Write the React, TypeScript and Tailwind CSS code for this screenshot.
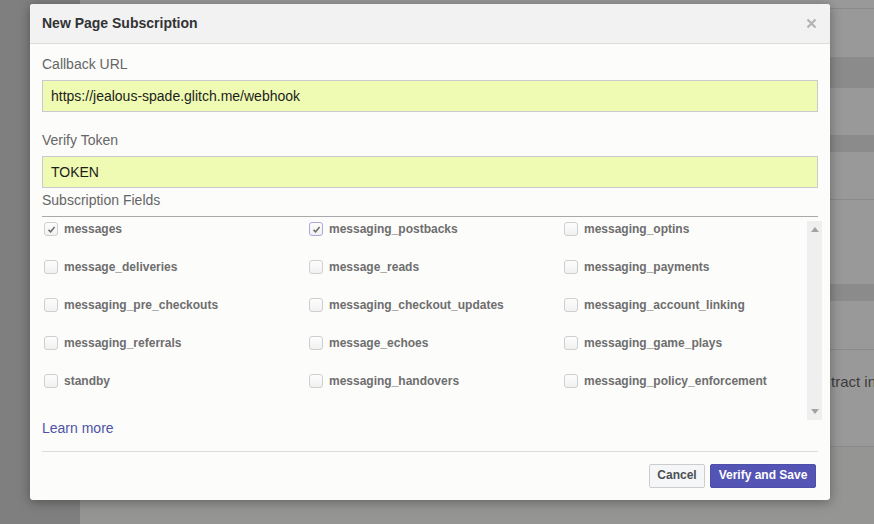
import React from "react";

const fields: { name: string; checked?: boolean; focus?: boolean }[][] = [
  [{ name: "messages", checked: true }, { name: "messaging_postbacks", checked: true, focus: true }, { name: "messaging_optins" }],
  [{ name: "message_deliveries" }, { name: "message_reads" }, { name: "messaging_payments" }],
  [{ name: "messaging_pre_checkouts" }, { name: "messaging_checkout_updates" }, { name: "messaging_account_linking" }],
  [{ name: "messaging_referrals" }, { name: "message_echoes" }, { name: "messaging_game_plays" }],
  [{ name: "standby" }, { name: "messaging_handovers" }, { name: "messaging_policy_enforcement" }],
];

const Checkbox = ({ checked, focus }: { checked?: boolean; focus?: boolean }) => (
  <span
    className={`flex h-[14px] w-[14px] shrink-0 items-center justify-center rounded-[3px] border bg-gradient-to-b from-[#fdfdfd] to-[#f1f1f1] ${
      focus ? "border-[#a9a9dc]" : "border-[#cfcfcf]"
    }`}
  >
    {checked && (
      <svg width="9" height="9" viewBox="0 0 9 9">
        <path d="M1.5 4.8 L3.6 6.8 L7.6 2" fill="none" stroke="#6f6f6f" strokeWidth="1.6" />
      </svg>
    )}
  </span>
);

const Background = () => (
  <div className="flex h-[524px] w-[874px]">
    <div className="w-[80px] shrink-0 bg-[#7f7f7f]" />
    <div className="flex min-w-0 flex-1 flex-col overflow-hidden bg-[#9a999a]">
      <div className="h-[9px] border-b border-[#8b8a8b]" />
      <div className="h-[48px]" />
      <div className="h-[31px] bg-[#8c8b8c]" />
      <div className="h-[47px]" />
      <div className="h-[17px] bg-[#8c8b8c]" />
      <div className="h-[48px] border-b border-[#8b8a8b]" />
      <div className="h-[84px]" />
      <div className="h-[17px] bg-[#8c8b8c]" />
      <div className="h-[49px] border-b border-[#8b8a8b]" />
      <div className="h-[97px] border-b border-[#8b8a8b] pl-[751px] pt-[21px] text-[15px] text-[#3c3c3c] whitespace-nowrap">
        tract info
      </div>
      <div className="flex-1 bg-[#959594]" />
    </div>
  </div>
);

export default function App() {
  return (
    <div className="relative h-[524px] w-[874px] overflow-hidden font-['Liberation_Sans',Arial,sans-serif]">
      <Background />
      <div className="absolute left-[30px] top-[4px] flex h-[496px] w-[800px] flex-col overflow-hidden rounded-[3px] bg-[#fcfcfb] shadow-[0_2px_12px_rgba(0,0,0,0.35)]">
        <div className="flex h-[40px] shrink-0 items-center justify-between border-b border-[#dddddd] bg-[#f2f2f3] pl-[12px] pr-[13px]">
          <span className="text-[14px] font-bold text-[#333333]">New Page Subscription</span>
          <svg width="11" height="11" viewBox="0 0 11 11">
            <path d="M1.5 1.5 L9.5 9.5 M9.5 1.5 L1.5 9.5" stroke="#b3b3b3" strokeWidth="2.2" />
          </svg>
        </div>
        <div className="flex flex-1 flex-col px-[12px]">
          <label className="mt-[11px] text-[14px] leading-[18px] text-[#666666]">Callback URL</label>
          <div className="mt-[7px] flex h-[32px] items-center border border-[#c9c9d0] bg-[#effbb2] px-[8px] text-[14px] text-[#1d1d1d]">
            https://jealous-spade.glitch.me/webhook
          </div>
          <label className="mt-[19px] text-[14px] leading-[18px] text-[#666666]">Verify Token</label>
          <div className="mt-[7px] flex h-[32px] items-center border border-[#c9c9d0] bg-[#effbb2] px-[8px] text-[14px] text-[#1d1d1d]">
            TOKEN
          </div>
          <label className="mt-[3px] text-[14px] leading-[18px] text-[#666666]">Subscription Fields</label>
          <div className="mt-[7px] h-px bg-[#a9a9a9]" />
          <div className="mr-[-4px] mt-[4px] flex h-[199px]">
            <div className="flex-1 pt-[1px]">
              {fields.map((row, i) => (
                <div key={i} className="grid h-[38px] grid-cols-[265px_255px_1fr] pl-[2px]">
                  {row.map((f) => (
                    <div key={f.name} className="flex h-[14px] items-center gap-[6px]">
                      <Checkbox checked={f.checked} focus={f.focus} />
                      <span className="text-[12px] font-bold text-[#6e6e6e] whitespace-nowrap">{f.name}</span>
                    </div>
                  ))}
                </div>
              ))}
            </div>
            <div className="flex w-[15px] flex-col items-center justify-between bg-[#efefef] py-[6px]">
              <svg width="8" height="5" viewBox="0 0 8 5">
                <path d="M0 5 L4 0 L8 5 Z" fill="#a3a3a3" />
              </svg>
              <svg width="8" height="5" viewBox="0 0 8 5">
                <path d="M0 0 L4 5 L8 0 Z" fill="#a3a3a3" />
              </svg>
            </div>
          </div>
          <a className="mt-[-1px] text-[14px] leading-[18px] text-[#4f53a6]">Learn more</a>
          <div className="mt-[14px] h-px bg-[#dddddd]" />
          <div className="mr-[2px] mt-[12px] flex justify-end gap-[5px]">
            <button className="h-[24px] w-[56px] rounded-[2px] border border-[#cccccc] bg-[#f5f6f7] pb-[2px] text-[12px] font-bold text-[#4b4f56]">
              Cancel
            </button>
            <button className="h-[24px] w-[106px] rounded-[2px] border border-[#4e4eab] bg-[#5454b4] pb-[2px] text-[12px] font-bold text-white">
              Verify and Save
            </button>
          </div>
        </div>
      </div>
    </div>
  );
}
